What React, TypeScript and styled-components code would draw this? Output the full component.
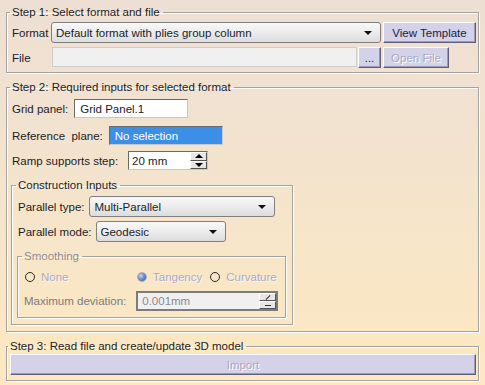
import styled, { createGlobalStyle } from 'styled-components';

const Global = createGlobalStyle`
  html, body { margin: 0; padding: 0; }
  body { background: #fde8c0; }
`;

const Page = styled.div`
  width: 485px;
  height: 385px;
  box-sizing: border-box;
  padding: 5px 6px 0 6px;
  background: linear-gradient(180deg, #eedfd4 0%, #f1e2d0 30%, #f6e5c9 60%, #fde8c0 100%);
  font-family: "Liberation Sans", Arial, sans-serif;
  font-size: 11px;
  color: #1c1c28;
  display: flex;
  flex-direction: column;
  gap: 7px;
  overflow: hidden;
`;

const Group = styled.fieldset<{ $pad: string; $ml?: number; $w?: number }>`
  margin: 0 0 0 ${({ $ml }) => $ml ?? 0}px;
  min-width: 0;
  ${({ $w }) => ($w ? `width: ${$w}px;` : '')}
  box-sizing: border-box;
  padding: ${({ $pad }) => $pad};
  border: 1px solid #a4a2a0;
  box-shadow: inset 1px 1px 0 #fff, 1px 1px 0 #fff;
`;

const Legend = styled.legend<{ $off?: boolean }>`
  padding: 0 3px 0 2px;
  margin-left: -2px;
  line-height: 14px;
  font-size: 11.5px;
  color: ${({ $off }) => ($off ? '#8d8c98' : '#1c1c28')};
`;

const FileGrid = styled.div`
  display: grid;
  grid-template-columns: 37px 1fr 93px;
  grid-template-rows: 21px 21px;
  column-gap: 2px;
  row-gap: 4px;
  align-items: center;
`;

const Label = styled.span<{ $off?: boolean }>`
  white-space: pre;
  font-size: 11.5px;
  color: ${({ $off }) => ($off ? '#7b7b80' : '#1c1c28')};
`;

const Combo = styled.div<{ $w?: number }>`
  ${({ $w }) => ($w ? `width: ${$w}px;` : '')}
  height: 21px;
  box-sizing: border-box;
  border: 1px solid #7f7f7f;
  border-radius: 3px;
  background: linear-gradient(180deg, #f8f8f8 0%, #ececec 50%, #dcdcdc 100%);
  display: flex;
  align-items: center;
  padding: 0 8px 0 4px;
`;

const ComboText = styled.span`
  flex: 1;
  white-space: nowrap;
  overflow: hidden;
  font-size: 11.5px;
`;

const Arrow = styled.span`
  width: 0;
  height: 0;
  border-left: 4px solid transparent;
  border-right: 4px solid transparent;
  border-top: 4px solid #111;
`;

const Button = styled.div<{ $off?: boolean; $w?: number }>`
  ${({ $w }) => ($w ? `width: ${$w}px;` : '')}
  height: 21px;
  box-sizing: border-box;
  background: #d3d2e8;
  border-top: 1px solid #fff;
  border-left: 1px solid #fff;
  border-right: 1px solid #5e5d7a;
  border-bottom: 1px solid #5e5d7a;
  box-shadow: inset -1px -1px 0 #9c9bb4;
  display: flex;
  align-items: center;
  justify-content: center;
  font-size: 11.5px;
  color: ${({ $off }) => ($off ? '#a9a8c4' : '#1c1c3c')};
  text-shadow: ${({ $off }) => ($off ? '1px 1px 0 #fff' : 'none')};
  white-space: nowrap;
`;

const FileLine = styled.div`
  display: flex;
  gap: 1px;
  height: 21px;
  margin-left: 1px;
`;

const OffField = styled.div`
  flex: 1;
  box-sizing: border-box;
  height: 20px;
  background: #f0f0f0;
  border: 1px solid #cfcdcb;
`;

const Body = styled.div`
  display: flex;
  flex-direction: column;
`;

const Row = styled.div<{ $mt?: number; $gap?: number }>`
  display: flex;
  align-items: center;
  gap: ${({ $gap }) => $gap ?? 6}px;
  margin-top: ${({ $mt }) => $mt ?? 0}px;
`;

const Field = styled.div<{ $w: number; $sel?: boolean }>`
  width: ${({ $w }) => $w}px;
  height: 19px;
  box-sizing: border-box;
  padding: 0 5px;
  display: flex;
  align-items: center;
  font-size: 11.5px;
  background: ${({ $sel }) => ($sel ? '#3b8fe6' : '#fff')};
  color: ${({ $sel }) => ($sel ? '#fff' : '#1c1c28')};
  border: 1px solid;
  border-color: #6a6a6a #c8c8c8 #c8c8c8 #6a6a6a;
`;

const Spin = styled.div<{ $w: number; $off?: boolean }>`
  width: ${({ $w }) => $w}px;
  height: ${({ $off }) => ($off ? 20 : 19)}px;
  box-sizing: border-box;
  display: flex;
  background: ${({ $off }) => ($off ? '#f0f0f0' : '#fff')};
  border: ${({ $off }) => ($off ? '2px solid #7c7c7c' : '1px solid #6a6a6a')};
  border-right-color: ${({ $off }) => ($off ? '#7c7c7c' : '#c8c8c8')};
  border-bottom-color: ${({ $off }) => ($off ? '#7c7c7c' : '#c8c8c8')};
`;

const SpinText = styled.span<{ $off?: boolean }>`
  flex: 1;
  display: flex;
  align-items: center;
  font-size: 11.5px;
  padding-left: ${({ $off }) => ($off ? 4 : 3)}px;
  color: ${({ $off }) => ($off ? '#8a8a8a' : '#1c1c28')};
`;

const SpinCol = styled.div`
  width: 17px;
  display: flex;
  flex-direction: column;
`;

const SpinBtn = styled.div`
  flex: 1;
  box-sizing: border-box;
  background: #e6e6e6;
  border-top: 1px solid #fff;
  border-left: 1px solid #fff;
  border-right: 1px solid #555;
  border-bottom: 1px solid #555;
  display: flex;
  align-items: center;
  justify-content: center;
`;

const Tri = styled.span<{ $up?: boolean }>`
  width: 0;
  height: 0;
  border-left: 4px solid transparent;
  border-right: 4px solid transparent;
  ${({ $up }) => ($up ? 'border-bottom: 4px solid #000;' : 'border-top: 4px solid #000;')}
`;

const Mark = styled.span<{ $slash?: boolean }>`
  width: 6px;
  height: 1px;
  background: #333;
  transform: ${({ $slash }) => ($slash ? 'rotate(-45deg)' : 'none')};
`;

const RadioRow = styled.div`
  display: grid;
  grid-template-columns: 104px max-content max-content;
  column-gap: 8px;
  align-items: center;
  height: 14px;
  margin-left: 1px;
`;

const RadioItem = styled.div`
  display: flex;
  align-items: center;
  gap: 6px;
  font-size: 11.5px;
  color: #abaac6;
  text-shadow: 1px 1px 0 rgba(255, 255, 255, 0.7);
`;

const Radio = styled.span<{ $on?: boolean }>`
  width: 10px;
  height: 10px;
  box-sizing: border-box;
  border-radius: 50%;
  border: 1px solid ${({ $on }) => ($on ? '#a8a8b0' : '#2a2a2a')};
  background: ${({ $on }) =>
    $on ? 'radial-gradient(circle at 35% 35%, #c8d6f0 0%, #6f8fcc 45%, #3b5996 100%)' : 'transparent'};
`;

export default function App() {
  return (
    <Page>
      <Global />
      <Group $pad="3px 2px 4px 5px">
        <Legend>Step 1: Select format and file</Legend>
        <FileGrid>
          <Label>Format</Label>
          <Combo>
            <ComboText>Default format with plies group column</ComboText>
            <Arrow />
          </Combo>
          <Button>View Template</Button>
          <Label>File</Label>
          <FileLine>
            <OffField />
            <Button $w={23}>...</Button>
          </FileLine>
          <Button $off $w={66}>Open File</Button>
        </FileGrid>
      </Group>

      <Group $pad="5px 2px 6px 5px">
        <Legend>Step 2: Required inputs for selected format</Legend>
        <Body>
          <Row>
            <Label>Grid panel:</Label>
            <Field $w={114}>Grid Panel.1</Field>
          </Row>
          <Row $mt={8}>
            <Label>Reference  plane:</Label>
            <Field $w={114} $sel>No selection</Field>
          </Row>
          <Row $mt={6} $gap={10}>
            <Label>Ramp supports step:</Label>
            <Spin $w={80}>
              <SpinText>20 mm</SpinText>
              <SpinCol>
                <SpinBtn><Tri $up /></SpinBtn>
                <SpinBtn><Tri /></SpinBtn>
              </SpinCol>
            </Spin>
          </Row>
          <Row $mt={8}>
            <Group $pad="4px 6px 6px 6px" $ml={-1} $w={282}>
              <Legend>Construction Inputs</Legend>
              <Body>
                <Row $gap={5}>
                  <Label>Parallel type:</Label>
                  <Combo $w={186}>
                    <ComboText>Multi-Parallel</ComboText>
                    <Arrow />
                  </Combo>
                </Row>
                <Row $mt={4} $gap={4}>
                  <Label>Parallel mode:</Label>
                  <Combo $w={130}>
                    <ComboText>Geodesic</ComboText>
                    <Arrow />
                  </Combo>
                </Row>
                <Row $mt={7}>
                  <Group $pad="7px 7px 6px 6px" $ml={-1} $w={271}>
                    <Legend $off>Smoothing</Legend>
                    <Body>
                      <RadioRow>
                        <RadioItem><Radio />None</RadioItem>
                        <RadioItem><Radio $on />Tangency</RadioItem>
                        <RadioItem><Radio />Curvature</RadioItem>
                      </RadioRow>
                      <Row $mt={7} $gap={10}>
                        <Label $off>Maximum deviation:</Label>
                        <Spin $w={144} $off>
                          <SpinText $off>0.001mm</SpinText>
                          <SpinCol>
                            <SpinBtn><Mark $slash /></SpinBtn>
                            <SpinBtn><Mark /></SpinBtn>
                          </SpinCol>
                        </Spin>
                      </Row>
                    </Body>
                  </Group>
                </Row>
              </Body>
            </Group>
          </Row>
        </Body>
      </Group>

      <Group $pad="1px 2px 5px 3px">
        <Legend>Step 3: Read file and create/update 3D model</Legend>
        <Button $off>Import</Button>
      </Group>
    </Page>
  );
}
